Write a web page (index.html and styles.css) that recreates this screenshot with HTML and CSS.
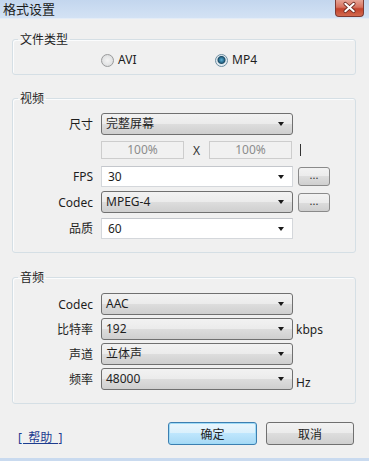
FILE: index.html
```html
<!DOCTYPE html>
<html>
	<head>
		<meta charset="UTF-8">
		<title>格式设置</title>
		<link rel="stylesheet" href="styles.css">
	</head>
	<body>
		<div class="dialog">
			<div class="titlebar">
				<span class="title">格式设置</span>
				<span class="close">
					<svg width="29" height="17" viewBox="0 0 29 17">
						<path d="M10 4.5 L19 12.5 M19 4.5 L10 12.5" stroke="#6b2a22" stroke-width="4" stroke-linecap="round"/>
						<path d="M10 4.5 L19 12.5 M19 4.5 L10 12.5" stroke="#ffffff" stroke-width="2.2" stroke-linecap="round"/>
					</svg>
				</span>
			</div>

			<div class="content">
				<fieldset class="group group-type">
					<legend>文件类型</legend>
					<div class="radios">
						<label class="radio"><span class="dot"></span>AVI</label>
						<label class="radio checked"><span class="dot"></span>MP4</label>
					</div>
				</fieldset>

				<fieldset class="group group-video">
					<legend>视频</legend>
					<div class="form">
						<span class="lbl">尺寸</span>
						<div class="combo gray">完整屏幕<i class="arrow"></i></div>
						<span></span>

						<span></span>
						<div class="size-row">
							<span class="field">100%</span>
							<span class="x">X</span>
							<span class="field">100%</span>
						</div>
						<span class="bar"></span>

						<span class="lbl">FPS</span>
						<div class="combo white">30<i class="arrow"></i></div>
						<span class="more">...</span>

						<span class="lbl">Codec</span>
						<div class="combo gray">MPEG-4<i class="arrow"></i></div>
						<span class="more">...</span>

						<span class="lbl">品质</span>
						<div class="combo white">60<i class="arrow"></i></div>
						<span></span>
					</div>
				</fieldset>

				<fieldset class="group group-audio">
					<legend>音频</legend>
					<div class="form audio">
						<span class="lbl">Codec</span>
						<div class="combo gray">AAC<i class="arrow"></i></div>
						<span></span>

						<span class="lbl">比特率</span>
						<div class="combo gray">192<i class="arrow"></i></div>
						<span class="unit">kbps</span>

						<span class="lbl">声道</span>
						<div class="combo gray">立体声<i class="arrow"></i></div>
						<span></span>

						<span class="lbl">频率</span>
						<div class="combo gray">48000<i class="arrow"></i></div>
						<span class="unit unit-low">Hz</span>
					</div>
				</fieldset>
			</div>

			<div class="footer">
				<a class="help" href="#">[&nbsp;&nbsp;帮助&nbsp;&nbsp;]</a>
				<span class="btn btn-default">确定</span>
				<span class="btn">取消</span>
			</div>

			<div class="bottom-bar"></div>
		</div>
	</body>
</html>
```

FILE: styles.css
```css
body{
	margin: 0;
	padding: 0;
	background: #f0f0f0;
	font-family: "Noto Sans", "Noto Sans CJK SC", sans-serif;
	font-size: 12px;
	color: #1e1e1e;
}
.dialog{
	width: 369px;
	height: 461px;
	display: flex;
	flex-direction: column;
	overflow: hidden;
}

/* 标题栏 */
.titlebar{
	height: 19px;
	display: flex;
	justify-content: space-between;
	align-items: flex-start;
	background: linear-gradient(#c3d6ee, #d3e2f4);
	border-bottom: 1px solid #e4ecf6;
	box-sizing: border-box;
}
.title{
	font-family: "Noto Sans CJK SC", sans-serif;
	font-size: 13px;
	line-height: 18px;
	margin-left: 3px;
	color: #1b1b1b;
}
.close{
	width: 29px;
	height: 17px;
	margin-right: 5px;
	border: 1px solid #7d3a33;
	border-top: none;
	border-radius: 0 0 4px 4px;
	box-sizing: border-box;
	background: linear-gradient(#e6a496 0, #d7725f 45%, #c3422c 55%, #d26a50 100%);
	display: flex;
	justify-content: center;
	align-items: center;
}
.close svg{
	display: block;
	margin-top: -1px;
}

/* 分组 */
.content{
	padding: 0 13px 0 12px;
}
.group{
	margin: 0;
	padding: 0;
	border: 1px solid #d5dfe5;
	border-radius: 3px;
	box-shadow: inset 1px 1px 0 #fbfcfd;
}
.group legend{
	margin-left: 5px;
	padding: 0 2px;
	line-height: 14px;
	font-family: "Noto Sans CJK SC", sans-serif;
}
.group-type{
	margin-top: 13px;
	padding: 7px 0 7px;
}
.group-video{
	margin-top: 16px;
	padding: 8px 0 13px;
}
.group-audio{
	margin-top: 17px;
	padding: 9px 0 13px;
}

/* 单选 */
.radios{
	display: flex;
	padding-left: 88px;
	height: 14px;
	align-items: center;
}
.radio{
	display: inline-flex;
	align-items: center;
	gap: 4px;
	line-height: 14px;
}
.radio:first-child{
	width: 114px;
}
.dot{
	width: 11px;
	height: 11px;
	border-radius: 50%;
	border: 1px solid #9a9b9c;
	background: radial-gradient(circle at 50% 50%, #f4f4f4 0, #e2e3e4 60%, #cfd0d1 100%);
}
.checked .dot{
	border-color: #6d8ea2;
	background: radial-gradient(circle at 50% 45%, #5fb0d6 0, #2a6d8f 2.5px, #1d4a63 3.5px, #dfe8ee 4.5px, #f2f4f5 100%);
}

/* 表单 */
.form{
	display: grid;
	grid-template-columns: 83px 192px auto;
	grid-auto-rows: 22px;
	column-gap: 5px;
	row-gap: 4px;
	align-items: center;
}
.form.audio{
	row-gap: 3px;
}
.lbl{
	text-align: right;
	padding-right: 3px;
	font-family: "Noto Sans", "Noto Sans CJK SC", sans-serif;
}
.combo{
	position: relative;
	height: 22px;
	line-height: 20px;
	box-sizing: border-box;
	white-space: nowrap;
}
.combo.gray{
	border: 1px solid #707070;
	border-radius: 3px;
	padding-left: 4px;
	background: linear-gradient(#f2f2f2 0, #ebebeb 50%, #dddddd 50%, #cfcfcf 100%);
}
.combo.white{
	border: 1px solid #d4d7db;
	border-top-color: #c4c7cc;
	padding-left: 6px;
	background: #ffffff;
	height: 21px;
}
.arrow{
	position: absolute;
	right: 8px;
	top: 8px;
	width: 0;
	height: 0;
	border-left: 3.5px solid transparent;
	border-right: 3.5px solid transparent;
	border-top: 4px solid #1a1a1a;
}
.size-row{
	display: flex;
	align-items: center;
	height: 18px;
}
.field{
	width: 83px;
	height: 18px;
	box-sizing: border-box;
	border: 1px solid #cdcdcd;
	background: #f1f1f1;
	color: #8c8c8c;
	text-align: center;
	line-height: 16px;
}
.x{
	width: 25px;
	text-align: center;
	color: #333;
}
.bar{
	width: 1px;
	height: 12px;
	background: #333;
	margin-left: 2px;
}
.more{
	width: 32px;
	height: 19px;
	box-sizing: border-box;
	border: 1px solid #8a8a8a;
	border-radius: 3px;
	background: linear-gradient(#f2f2f2 0, #ebebeb 50%, #dddddd 50%, #cfcfcf 100%);
	text-align: center;
	line-height: 14px;
	font-size: 11px;
	color: #333;
}
.unit{
	font-size: 12px;
	margin-left: -2px;
}
.unit-low{
	padding-top: 6px;
}

/* 底部 */
.footer{
	display: flex;
	align-items: center;
	margin-top: 18px;
	padding: 0 15px 0 18px;
}
.help{
	margin-right: auto;
	align-self: flex-end;
	color: #1d3c8f;
	text-decoration: underline;
	font-family: "Noto Sans", "Noto Sans CJK SC", sans-serif;
	line-height: 16px;
	margin-bottom: -1px;
}
.btn{
	width: 88px;
	height: 23px;
	box-sizing: border-box;
	border: 1px solid #707070;
	border-radius: 3px;
	background: linear-gradient(#f2f2f2 0, #ebebeb 50%, #dddddd 50%, #cfcfcf 100%);
	text-align: center;
	line-height: 21px;
	font-family: "Noto Sans CJK SC", sans-serif;
}
.btn-default{
	width: 89px;
	margin-right: 9px;
	border-color: #3c7fb1;
	background: linear-gradient(#eaf6fd 0, #d9f0fc 50%, #bee6fd 50%, #a7d9f5 100%);
	box-shadow: inset 0 0 0 1px #9fdbf7;
}
.bottom-bar{
	margin-top: auto;
	height: 3px;
	background: #c9daef;
}
```
